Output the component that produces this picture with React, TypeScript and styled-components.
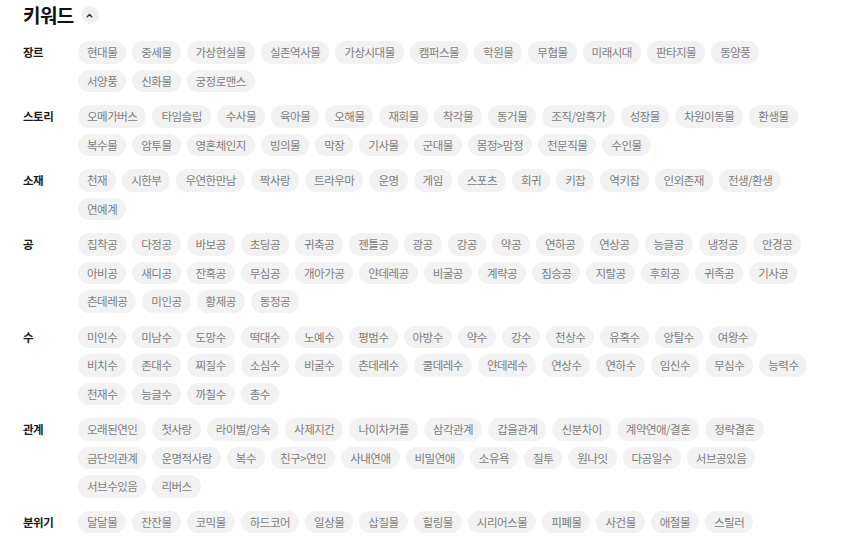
import React, { useState } from 'react';
import styled, { createGlobalStyle } from 'styled-components';

const GlobalStyle = createGlobalStyle`
  html, body {
    margin: 0;
    padding: 0;
    background: #ffffff;
  }
  body {
    font-family: 'Noto Sans CJK KR', 'Noto Sans', sans-serif;
  }
`;

const Page = styled.div`
  padding: 5px 23px 0;
  width: 850px;
  box-sizing: border-box;
`;

const Header = styled.div`
  display: flex;
  align-items: center;
  gap: 7px;
  height: 20px;
  margin-bottom: 16px;
`;

const Title = styled.h2`
  margin: 0;
  font-size: 19px;
  line-height: 20px;
  font-weight: 700;
  color: #111111;
  letter-spacing: -0.6px;
`;

const ToggleButton = styled.button`
  appearance: none;
  border: none;
  padding: 0;
  width: 18px;
  height: 18px;
  border-radius: 50%;
  background: #f0f0f0;
  display: flex;
  align-items: center;
  justify-content: center;
  cursor: pointer;
  color: #333333;
`;

const Section = styled.div`
  display: grid;
  grid-template-columns: 55px 731px;
  margin-bottom: 13px;
`;

const Label = styled.div`
  font-size: 11.5px;
  font-weight: 700;
  letter-spacing: -0.5px;
  color: #1c1c1c;
  line-height: 22.5px;
  height: 22.5px;
`;

const ChipList = styled.div`
  display: flex;
  flex-wrap: wrap;
  gap: 6px;
`;

const Chip = styled.span`
  display: inline-flex;
  align-items: center;
  height: 22.5px;
  padding: 0 9px;
  border-radius: 12px;
  background: #f2f2f2;
  color: #7d7d7d;
  font-size: 11.5px;
  letter-spacing: -0.5px;
  white-space: nowrap;
`;

type Group = {
  label: string;
  keywords: string[];
};

const groups: Group[] = [
  {
    label: '장르',
    keywords: ['현대물', '중세물', '가상현실물', '실존역사물', '가상시대물', '캠퍼스물', '학원물', '무협물', '미래시대', '판타지물', '동양풍', '서양풍', '신화물', '궁정로맨스'],
  },
  {
    label: '스토리',
    keywords: ['오메가버스', '타임슬립', '수사물', '육아물', '오해물', '재회물', '착각물', '동거물', '조직/암흑가', '성장물', '차원이동물', '환생물', '복수물', '암투물', '영혼체인지', '빙의물', '막장', '기사물', '군대물', '몸정>맘정', '전문직물', '수인물'],
  },
  {
    label: '소재',
    keywords: ['천재', '시한부', '우연한만남', '짝사랑', '트라우마', '운명', '게임', '스포츠', '회귀', '키잡', '역키잡', '인외존재', '전생/환생', '연예계'],
  },
  {
    label: '공',
    keywords: ['집착공', '다정공', '바보공', '초딩공', '귀축공', '젠틀공', '광공', '강공', '약공', '연하공', '연상공', '능글공', '냉정공', '안경공', '아비공', '새디공', '잔혹공', '무심공', '개아가공', '얀데레공', '비굴공', '계략공', '짐승공', '지랄공', '후회공', '귀족공', '기사공', '츤데레공', '미인공', '황제공', '동정공'],
  },
  {
    label: '수',
    keywords: ['미인수', '미남수', '도망수', '떡대수', '노예수', '평범수', '아방수', '약수', '강수', '천상수', '유혹수', '앙탈수', '여왕수', '비치수', '존대수', '찌질수', '소심수', '비굴수', '츤데레수', '쿨데레수', '얀데레수', '연상수', '연하수', '임신수', '무심수', '능력수', '천재수', '능글수', '까칠수', '총수'],
  },
  {
    label: '관계',
    keywords: ['오래된연인', '첫사랑', '라이벌/앙숙', '사제지간', '나이차커플', '삼각관계', '갑을관계', '신분차이', '계약연애/결혼', '정략결혼', '금단의관계', '운명적사랑', '복수', '친구>연인', '사내연애', '비밀연애', '소유욕', '질투', '원나잇', '다공일수', '서브공있음', '서브수있음', '리버스'],
  },
  {
    label: '분위기',
    keywords: ['달달물', '잔잔물', '코믹물', '하드코어', '일상물', '삽질물', '힐링물', '시리어스물', '피폐물', '사건물', '애절물', '스릴러'],
  },
];

const Caret = ({ open }: { open: boolean }) => (
  <svg width="9" height="9" viewBox="0 0 10 10" style={{ transform: open ? 'none' : 'rotate(180deg)' }}>
    <polyline points="2.5,6.5 5,4 7.5,6.5" fill="none" stroke="currentColor" strokeWidth="1.6" strokeLinecap="round" strokeLinejoin="round" />
  </svg>
);

const App = () => {
  const [open, setOpen] = useState(true);

  return (
    <Page>
      <GlobalStyle />
      <Header>
        <Title>키워드</Title>
        <ToggleButton onClick={() => setOpen(!open)} aria-label="toggle">
          <Caret open={open} />
        </ToggleButton>
      </Header>
      {open
        ? groups.map((group) => (
            <Section key={group.label}>
              <Label>{group.label}</Label>
              <ChipList>
                {group.keywords.map((keyword) => (
                  <Chip key={keyword}>{keyword}</Chip>
                ))}
              </ChipList>
            </Section>
          ))
        : null}
    </Page>
  );
};

export default App;
